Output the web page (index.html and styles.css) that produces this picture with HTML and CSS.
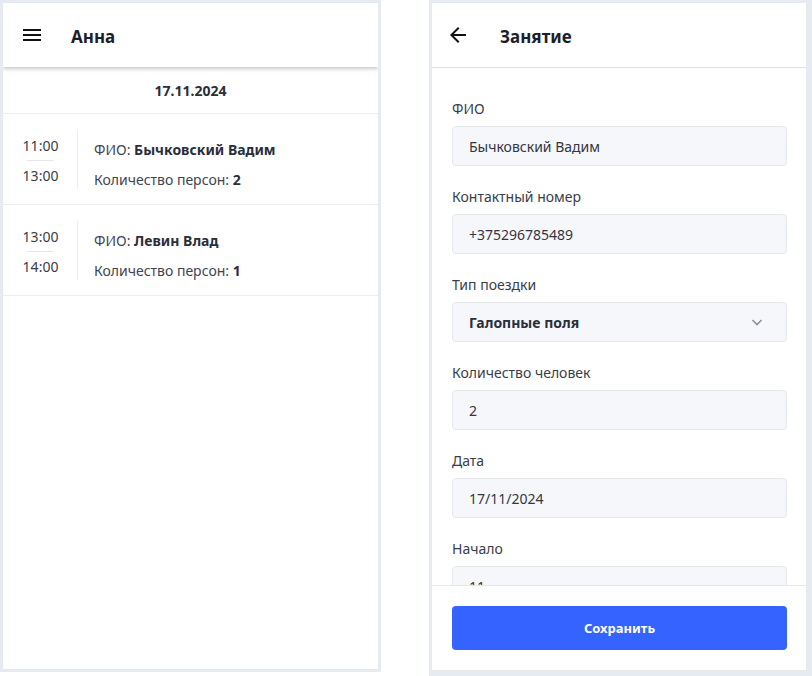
FILE: index.html
```html
<!DOCTYPE html>
<html lang="ru">
<head>
<meta charset="utf-8">
<title>Расписание</title>
<link rel="stylesheet" href="styles.css">
</head>
<body>
<div class="stage">
  <section class="device device-left">
    <header class="appbar appbar-shadow">
      <svg class="icon" width="24" height="24" viewBox="0 0 24 24"><path d="M3 18h18v-2H3v2zm0-5h18v-2H3v2zm0-7v2h18V6H3z" fill="#111"/></svg>
      <h1 class="appbar-title">Анна</h1>
    </header>
    <div class="date-row">17.11.2024</div>
    <div class="lesson">
      <div class="times">
        <span>11:00</span>
        <i class="time-sep"></i>
        <span>13:00</span>
      </div>
      <div class="lesson-info">
        <p>ФИО: <b>Бычковский Вадим</b></p>
        <p>Количество персон: <b>2</b></p>
      </div>
    </div>
    <div class="lesson">
      <div class="times">
        <span>13:00</span>
        <i class="time-sep"></i>
        <span>14:00</span>
      </div>
      <div class="lesson-info">
        <p>ФИО: <b>Левин Влад</b></p>
        <p>Количество персон: <b>1</b></p>
      </div>
    </div>
  </section>

  <section class="device device-right">
    <header class="appbar appbar-border">
      <svg class="icon" width="24" height="24" viewBox="0 0 24 24"><path d="M20 11H7.83l5.59-5.59L12 4l-8 8 8 8 1.41-1.41L7.83 13H20v-2z" fill="#111"/></svg>
      <h1 class="appbar-title">Занятие</h1>
    </header>
    <div class="form">
      <div class="field">
        <label>ФИО</label>
        <div class="input">Бычковский Вадим</div>
      </div>
      <div class="field">
        <label>Контактный номер</label>
        <div class="input">+375296785489</div>
      </div>
      <div class="field">
        <label>Тип поездки</label>
        <div class="input select">
          <span>Галопные поля</span>
          <svg width="14" height="14" viewBox="0 0 14 14"><path d="M2.5 5l4.5 4.5L11.5 5" fill="none" stroke="#8b909d" stroke-width="1.6"/></svg>
        </div>
      </div>
      <div class="field">
        <label>Количество человек</label>
        <div class="input">2</div>
      </div>
      <div class="field">
        <label>Дата</label>
        <div class="input">17/11/2024</div>
      </div>
      <div class="field">
        <label>Начало</label>
        <div class="input">11</div>
      </div>
    </div>
    <footer class="footer">
      <button class="save">Сохранить</button>
    </footer>
  </section>
</div>
</body>
</html>
```

FILE: styles.css
```css
* { box-sizing: border-box; }
html, body { margin: 0; padding: 0; background: #fff; overflow: hidden; }
body {
  font-family: "Noto Sans", "Open Sans", sans-serif;
  font-size: 14px;
  color: #333640;
}
.stage {
  display: flex;
  align-items: flex-start;
  gap: 48px;
}
.device {
  background: #fff;
  border: 3px solid #e6eaf1;
  overflow: hidden;
  display: flex;
  flex-direction: column;
}
.device-left {
  width: 381px;
  height: 672px;
}
.device-right {
  width: 383px;
  height: 676px;
  border-right-width: 6px;
  border-bottom-width: 6px;
}
.appbar {
  height: 64px;
  flex: none;
  display: flex;
  align-items: center;
  padding-left: 17px;
  background: #fff;
  position: relative;
  z-index: 1;
}
.appbar-shadow { box-shadow: 0 2px 4px rgba(0,0,0,0.22); }
.appbar-border { border-bottom: 1px solid #dcdfe5; height: 65px; }
.icon { flex: none; }
.appbar-title {
  margin: 2px 0 0 27px;
  font-size: 17px;
  font-weight: 700;
  color: #1c1e2c;
}
.device-right .appbar { padding-left: 14px; }
.device-right .appbar-title { margin-left: 30px; }

.date-row {
  height: 47px;
  flex: none;
  display: flex;
  align-items: center;
  justify-content: center;
  font-weight: 700;
  color: #2b2e3b;
  border-bottom: 1px solid #eceef2;
}
.lesson {
  height: 91px;
  flex: none;
  display: flex;
  padding: 15px 0 15px 21px;
  border-bottom: 1px solid #eceef2;
}
.times {
  width: 54px;
  padding: 3px 20px 0 0;
  border-right: 1px solid #eceef2;
  display: flex;
  flex-direction: column;
  justify-content: center;
  align-items: center;
  color: #3a3d48;
  line-height: 20px;
}
.time-sep {
  display: block;
  width: 27px;
  height: 1px;
  background: #e6e8ec;
  margin: 4px 0 5px;
}
.lesson-info {
  padding: 11px 0 0 16px;
}
.lesson-info p {
  margin: 0 0 10px;
  line-height: 20px;
  color: #41444f;
}
.lesson-info b { color: #2b2e3b; font-weight: 700; }

.form {
  flex: 1;
  overflow: hidden;
  padding: 31px 19px 0 20px;
}
.field { margin-bottom: 21px; }
.field label {
  display: block;
  line-height: 20px;
  margin-bottom: 7px;
  color: #3a3d48;
}
.input {
  height: 40px;
  background: #f6f7fb;
  border: 1px solid #e4e7ee;
  border-radius: 4px;
  padding: 0 16px;
  display: flex;
  align-items: center;
  color: #333640;
}
.select { justify-content: space-between; padding-right: 22px; font-weight: 700; color: #2b2e3b; }
.footer {
  flex: none;
  height: 85px;
  border-top: 1px solid #e4e7ee;
  padding: 20px 19px 20px 20px;
  background: #fff;
}
.save {
  width: 100%;
  height: 44px;
  border: 0;
  border-radius: 4px;
  background: #3463ff;
  color: #fff;
  font-family: inherit;
  font-size: 13px;
  font-weight: 700;
}
```
